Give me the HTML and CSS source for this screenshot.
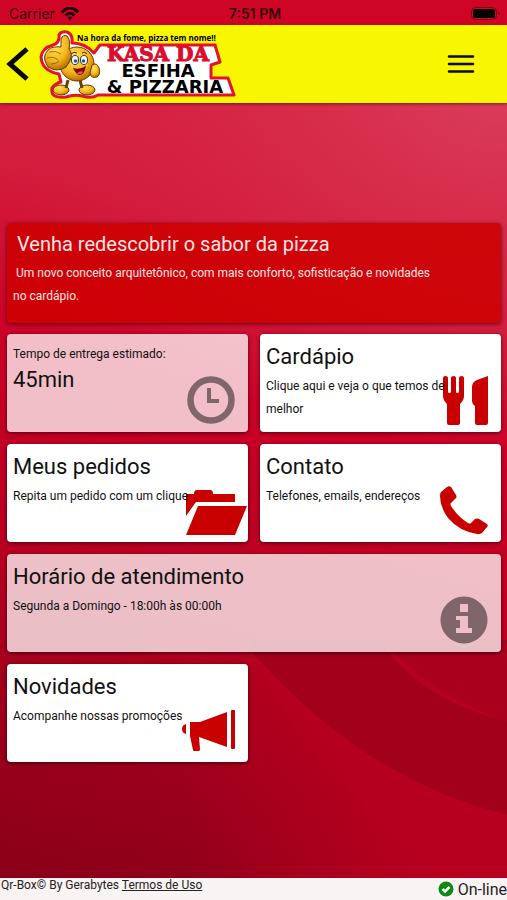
FILE: index.html
```html
<!DOCTYPE html>
<html lang="pt-BR">
  <head>
    <meta charset="utf-8">
    <meta name="viewport" content="width=device-width, initial-scale=1">
    <title>Kasa da Esfiha &amp; Pizzaria</title>
    <link rel="stylesheet" href="styles.css">
  </head>
  <body>
    <svg class="backdrop" viewBox="0 0 507 900" preserveAspectRatio="none" aria-hidden="true">
      <defs>
        <linearGradient id="base" x1="0.35" y1="0" x2="0.2" y2="1">
          <stop offset="0" stop-color="#da2a49"/>
          <stop offset="0.22" stop-color="#d41d3e"/>
          <stop offset="0.42" stop-color="#cc0026"/>
          <stop offset="0.65" stop-color="#b80020"/>
          <stop offset="0.85" stop-color="#9b001b"/>
          <stop offset="1" stop-color="#8b0018"/>
        </linearGradient>
        <radialGradient id="glow" cx="1" cy="0.2" r="1">
          <stop offset="0" stop-color="#da4560" stop-opacity="0.8"/>
          <stop offset="0.5" stop-color="#d62c4a" stop-opacity="0.5"/>
          <stop offset="1" stop-color="#d31638" stop-opacity="0"/>
        </radialGradient>
        <linearGradient id="fade" gradientUnits="userSpaceOnUse" x1="180" y1="820" x2="400" y2="780">
          <stop offset="0" stop-color="#b6001f" stop-opacity="0"/>
          <stop offset="1" stop-color="#b6001f"/>
        </linearGradient>
      </defs>
      <rect width="507" height="900" fill="url(#base)"/>
      <rect width="507" height="400" fill="url(#glow)"/>
      <path d="M180 640H507V900H180Z" fill="url(#fade)"/>
      <path d="M250 650C330 740 410 790 507 815V722C430 700 400 670 380 640H250Z" fill="#a3001c"/>
      <path d="M380 640C420 680 460 705 507 722V640Z" fill="#aa001e"/>
      <path d="M250 650C300 760 400 850 480 900H507V815C410 790 330 740 250 650Z" fill="#b8001f" fill-opacity="0.5"/>
    </svg>

    <div class="status-bar">
      <span class="carrier">
        Carrier
        <svg width="18" height="14" viewBox="0 0 18 14" fill="none" stroke="#22000a" stroke-width="3">
          <path d="M1 5.500C6-.5 12-.5 17 5.500"/>
          <path d="M4.500 8.500C7 5.500 11 5.500 13.500 8.500"/>
          <path d="M6.500 10.500 9 13.500 11.500 10.500C10 9.200 8 9.200 6.500 10.500Z" fill="#22000a" stroke="none"/>
        </svg>
      </span>
      <span class="time">7:51 PM</span>
      <svg class="battery" width="30" height="13" viewBox="0 0 30 13">
        <rect x="0.500" y="0.500" width="25" height="12" rx="4" fill="none" stroke="#7d0018"/>
        <rect x="2" y="2" width="22" height="9" rx="2"/>
        <path d="M27.500 4.500v4c2-1 2-3 0-4z" fill="#7d0018"/>
      </svg>
    </div>

    <header class="header">
      <button class="icon-btn back" aria-label="Voltar">
        <svg width="24" height="34" viewBox="0 0 24 34" fill="none" stroke="#0a0a00" stroke-width="5">
          <path d="M21 2 4 17 21 32"/>
        </svg>
      </button>
      <svg class="logo" width="198" height="72" viewBox="38 28 198 72" role="img" aria-label="Kasa da Esfiha e Pizzaria">
        <defs>
          <radialGradient id="face" cx="0.4" cy="0.3" r="0.75">
            <stop offset="0" stop-color="#ffe45c"/>
            <stop offset="0.6" stop-color="#f4b41a"/>
            <stop offset="1" stop-color="#a86300"/>
          </radialGradient>
        </defs>
        <!-- outline behind the whole mark -->
        <path fill="#fff" stroke="#e3122d" stroke-width="3" stroke-linejoin="round" d="M59 35Q61 31 67 32Q73 34 72 43Q85 43 94 53L100 45H215L220 62L211 65V78H228L234 95H98Q92 99 82 96Q75 94 66 97Q50 99 52 88Q56 83 61 82L59 74Q42 71 41 57Q42 48 53 45Q60 43 59 35Z"/>
        <g stroke="#6b3d00">
          <ellipse cx="61" cy="90" rx="8" ry="5" fill="url(#face)"/>
          <ellipse cx="87" cy="90" rx="8" ry="5" fill="url(#face)"/>
          <path d="M68 80 66 88M80 80 82 88" stroke-width="3"/>
          <circle cx="77" cy="64" r="17" fill="url(#face)"/>
          <path d="M92 65q5-3 7 3q2 6-2 9q-6 2-7-4z" fill="url(#face)"/>
          <path d="M61 39Q63 34 67 36Q71 40 69 49Q75 56 66 67Q57 73 48 67Q41 57 48 50Q52 46 61 47Z" fill="url(#face)"/>
          <path d="M49 52q7-2 12 2M47 58q7-2 11 2M51 64q5 0 8-3" fill="none" stroke-opacity="0.6"/>
        </g>
        <g fill="#fff" stroke="#333">
          <ellipse cx="75" cy="60" rx="3.500" ry="4.500"/>
          <ellipse cx="84" cy="60" rx="3.500" ry="4.500"/>
        </g>
        <circle cx="75.500" cy="61" r="1.800" fill="#165aa5"/>
        <circle cx="83.500" cy="61" r="1.800" fill="#165aa5"/>
        <path d="M71 54q3-3 6-1M82 53q3-2 5 1" fill="none" stroke="#4c2a00"/>
        <path d="M73 68Q80 70 86 66Q84 76 79 75Q75 73 73 68Z" fill="#7b0a0a"/>
        <path d="M77 73Q81 70 83 72Q81 76 77 73Z" fill="#ff4b4b"/>
        <text class="logo-tagline" x="77" y="41">Na hora da fome, pizza tem nome!!</text>
        <text class="logo-kasa" x="158" y="61" text-anchor="middle">KASA DA</text>
        <text class="logo-name" x="158" y="77" text-anchor="middle">ESFIHA</text>
        <text class="logo-name" x="165" y="93" text-anchor="middle">&amp; PIZZARIA</text>
      </svg>
      <button class="icon-btn menu" aria-label="Menu">
        <svg width="28" height="20" viewBox="0 0 28 20" stroke="#0a0a00" stroke-width="2.500" stroke-linecap="round">
          <path d="M2 2.500H26M2 10H26M2 17.500H26"/>
        </svg>
      </button>
    </header>

    <main class="content">
      <section class="banner">
        <h1>Venha redescobrir o sabor da pizza</h1>
        <p>Um novo conceito arquitetônico, com mais conforto, sofisticação e novidades no cardápio.</p>
      </section>

      <div class="cards">
        <section class="card info">
          <p>Tempo de entrega estimado:</p>
          <h2 class="value">45min</h2>
          <svg class="card-icon" viewBox="0 0 64 50">
            <circle cx="27" cy="25" r="20.500" fill="none" stroke="currentColor" stroke-width="6.500"/>
            <path d="M23 13h4v11h8v4H23z"/>
          </svg>
        </section>

        <a class="card" href="#cardapio">
          <h2>Cardápio</h2>
          <p>Clique aqui e veja o que temos de melhor</p>
          <svg class="card-icon" viewBox="0 0 64 50">
            <path d="M6 3q0-2 2.500-2T11 3V17q0 1 1.300 1T14 17V3q0-2 2.500-2T19 3V17q0 1 1.300 1T22 17V3q0-2 2.500-2T27 3V21q0 4-4 8V48q0 2-2 2H12q-2 0-2-2V29q-4-4-4-8z"/>
            <path d="M51 1V48q0 2-2 2H40q-2 0-2-2V31q-3-2-3-5V12q0-5 5-7z"/>
          </svg>
        </a>

        <a class="card" href="#pedidos">
          <h2>Meus pedidos</h2>
          <p>Repita um pedido com um clique</p>
          <svg class="card-icon" viewBox="0 0 64 50">
            <path d="M2 31V9h8q0-4 3-4H26q3 0 3 4H51v8H12z"/>
            <path d="M14 21H63L51 50H2z"/>
          </svg>
        </a>

        <a class="card" href="#contato">
          <h2>Contato</h2>
          <p>Telefones, emails, endereços</p>
          <svg class="card-icon" viewBox="0 0 64 50">
            <path d="M4 7 10 2q2-1.500 4 0l5 8q1 2 0 3l-5 5q-1 1 0 3 7 11 17 17 2 1 3 0l4-4q2-1 4 0l8 5q1.500 1.500 0 3l-5 6q-2 1.500-5 1Q22 46 11 33 3 22 3 11 3 8 4 7z"/>
          </svg>
        </a>

        <section class="card info wide">
          <h2>Horário de atendimento</h2>
          <p>Segunda a Domingo - 18:00h às 00:00h</p>
          <svg class="card-icon" viewBox="0 0 64 50">
            <path fill-rule="evenodd" d="M27 1.500a23.500 23.500 0 1 0 .01 0zM23 9h8v8h-8zM19 21h12v12h4v5H19v-5h4v-8h-4z"/>
          </svg>
        </section>

        <a class="card" href="#novidades">
          <h2>Novidades</h2>
          <p>Acompanhe nossas promoções</p>
          <svg class="card-icon" viewBox="0 0 64 50">
            <path d="M2 19v10q-4-1-4-5t4-5z"/>
            <path d="M6 17h10L43 7v35L15 32l1 12q0 2-1 2h-5q-1 0-1-1L6 31z"/>
            <rect x="47" y="5" width="4" height="39" rx="1"/>
          </svg>
        </a>
      </div>
    </main>

    <footer class="footer">
      <span>Qr-Box© By Gerabytes <a href="#termos">Termos de Uso</a></span>
      <span class="online">
        <svg width="16" height="16" viewBox="0 0 16 16">
          <circle cx="8" cy="8" r="7.500" fill="#0b8a12"/>
          <path d="M4.500 8 7 10.500 11.500 6" fill="none" stroke="#fff" stroke-width="2.500"/>
        </svg>
        On-line
      </span>
    </footer>
  </body>
</html>
```

FILE: styles.css
```css
* {
  box-sizing: border-box;
}

body {
  margin: 0;
  min-height: 100vh;
  display: flex;
  flex-direction: column;
  position: relative;
  background: #b80020;
  color: #111;
  font-family: Roboto, "Liberation Sans", sans-serif;
  font-size: 12px;
}

h1,
h2,
p {
  margin: 0;
  font-weight: normal;
}

.backdrop {
  position: absolute;
  inset: 0;
  width: 100%;
  height: 100%;
  z-index: -1;
}

.status-bar {
  display: grid;
  grid-template-columns: 1fr auto 1fr;
  align-items: center;
  height: 25px;
  padding: 2px 6px 0 9px;
  background: #cf0525;
  color: #38000c;
  font-family: Inter, Roboto, sans-serif;
  font-size: 14px;
}

.carrier {
  display: flex;
  align-items: center;
  gap: 6px;
}

.time {
  font-weight: 600;
}

.battery {
  justify-self: end;
}

.header {
  display: flex;
  align-items: center;
  height: 78px;
  padding: 0 32px 0 6px;
  background: #f8f600;
  box-shadow: 0 1px 3px rgba(0, 0, 0, 0.5);
}

.icon-btn {
  display: flex;
  padding: 0;
  border: 0;
  background: none;
  cursor: pointer;
}

.logo {
  margin-left: 8px;
}

.logo-tagline {
  font: bold 8px "Open Sans", sans-serif;
}

.logo-kasa {
  font: bold 20px "DejaVu Serif", serif;
  fill: #dc0d2c;
  stroke: #dc0d2c;
}

.logo-name {
  font: bold 18px "DejaVu Sans", sans-serif;
}

.menu {
  margin-left: auto;
}

.content {
  flex: 1;
  padding: 120px 6px 12px 7px;
}

.banner {
  min-height: 100px;
  margin-bottom: 11px;
  padding: 7px 60px 7px 6px;
  border-radius: 4px;
  background: rgba(204, 0, 0, 0.85);
  box-shadow: 0 1px 4px rgba(0, 0, 0, 0.6);
  color: #ffe3e3;

  h1 {
    padding-left: 4px;
    font-size: 20px;
    line-height: 28px;
  }

  p {
    margin-top: 4px;
    line-height: 23px;
    text-indent: 3px;
  }
}

.cards {
  display: grid;
  grid-template-columns: 1fr 1fr;
  gap: 12px;
}

.card {
  position: relative;
  min-height: 98px;
  padding: 9px 6px 6px;
  border-radius: 4px;
  background: #fff;
  box-shadow: 0 1px 4px rgba(0, 0, 0, 0.6);
  color: #111;
  text-decoration: none;

  h2 {
    font-size: 22px;
    line-height: 28px;
  }

  p {
    position: relative;
    z-index: 1;
    padding-right: 20px;
    line-height: 23px;
  }

  h2 + p {
    margin-top: 4px;
  }

  &.info {
    background: rgba(255, 255, 255, 0.75);
  }

  &.wide {
    grid-column: span 2;
  }
}

.card-icon {
  position: absolute;
  right: 0;
  bottom: 7px;
  width: 64px;
  height: 50px;
  overflow: visible;
  color: #c80000;
  fill: currentColor;

  .info & {
    color: #80666a;
  }
}

.footer {
  display: flex;
  justify-content: space-between;
  height: 22px;
  padding-left: 1px;
  background: #faf3f4;
  color: #222;

  a {
    color: #222;
  }
}

.online {
  display: flex;
  align-items: center;
  gap: 4px;
  font-size: 16px;
}
```
